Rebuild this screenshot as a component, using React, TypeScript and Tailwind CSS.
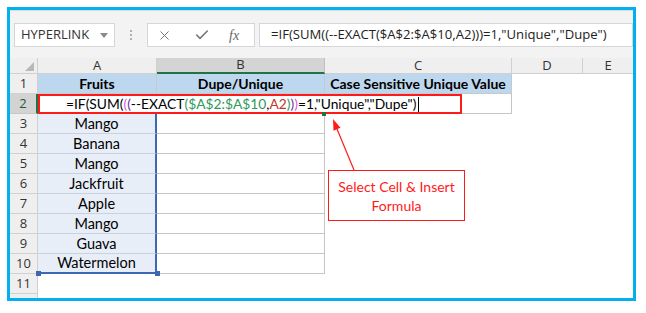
import { X, Check } from 'lucide-react';

const ui = { fontFamily: '"Open Sans", "Liberation Sans", sans-serif' };
const cell = { fontFamily: 'Lato, "Liberation Sans", sans-serif' };

const fruits = ['Mango', 'Banana', 'Mango', 'Jackfruit', 'Apple', 'Mango', 'Guava', 'Watermelon'];

function RowHead({ n, active }: { n: string; active?: boolean }) {
  return (
    <div
      className={
        active
          ? 'w-[28px] h-full shrink-0 flex items-center justify-center bg-[#d3d3d3] border-r-2 border-r-[#217346] border-b border-b-[#c6c6c6] text-[13px] text-[#1e5b35]'
          : 'w-[28px] h-full shrink-0 flex items-center justify-center bg-[#efefef] border-r border-b border-[#d0d0d0] text-[13px] text-[#333]'
      }
      style={ui}
    >
      {n}
    </div>
  );
}

export default function App() {
  return (
    <div className="relative w-[646px] h-[313px] bg-white overflow-hidden">
      <div className="ml-[7px] mt-[7px] w-[629px] h-[294px] border-[3px] border-[#00b0f0] flex flex-col overflow-hidden">
        {/* formula bar */}
        <div className="h-[48px] shrink-0 bg-[#f3f3f3] border-t border-[#dcdcdc] flex items-start pt-[12px] pl-[4px]">
          <div className="w-[101px] h-[24px] bg-white border border-[#d6d6d6] flex items-center justify-between pl-[6px] pr-[6px]">
            <span className="text-[13px] text-[#333]" style={ui}>HYPERLINK</span>
            <span className="w-0 h-0 border-l-[4px] border-r-[4px] border-t-[5px] border-l-transparent border-r-transparent border-t-[#8a8a8a]" />
          </div>
          <div className="w-[32px] h-[24px] flex flex-col items-center justify-center gap-[2px]">
            <span className="w-[2px] h-[2px] bg-[#b0b0b0]" />
            <span className="w-[2px] h-[2px] bg-[#b0b0b0]" />
            <span className="w-[2px] h-[2px] bg-[#b0b0b0]" />
          </div>
          <div className="w-[108px] h-[24px] bg-white border border-[#d6d6d6] flex items-center pl-[9px]">
            <X size={15} strokeWidth={1.6} className="text-[#777]" />
            <Check size={16} strokeWidth={2.4} className="text-[#777] ml-[22px]" />
            <span className="ml-[19px] text-[14px] italic text-[#666]" style={{ fontFamily: '"Liberation Serif", serif' }}>
              fx
            </span>
          </div>
          <div className="ml-[4px] flex-1 h-[24px] bg-white border border-[#d6d6d6] flex items-center pl-[11px]">
            <span className="text-[13.1px] text-[#222] whitespace-nowrap" style={ui}>
              =IF(SUM((--EXACT($A$2:$A$10,A2)))=1,"Unique","Dupe")
            </span>
          </div>
        </div>

        {/* column headers */}
        <div className="h-[16px] shrink-0 flex text-[13px] text-[#333]" style={ui}>
          <div className="w-[28px] shrink-0 bg-[#efefef] border-r border-b border-[#d0d0d0]">
            <svg width="27" height="15">
              <polygon points="15,13 24,13 24,4" fill="#b8b8b8" />
            </svg>
          </div>
          <div className="w-[119px] shrink-0 bg-[#efefef] border-r border-b border-[#d0d0d0] flex items-center justify-center">A</div>
          <div className="w-[168px] shrink-0 bg-[#d4d4d4] border-r border-[#c0c0c0] border-b-2 border-b-[#217346] flex items-center justify-center">B</div>
          <div className="w-[187px] shrink-0 bg-[#efefef] border-r border-b border-[#d0d0d0] flex items-center justify-center">C</div>
          <div className="w-[71px] shrink-0 bg-[#efefef] border-r border-b border-[#d0d0d0] flex items-center justify-center">D</div>
          <div className="flex-1 bg-[#efefef] border-b border-[#d0d0d0] flex items-center justify-center">E</div>
        </div>

        {/* row 1 */}
        <div className="h-[20px] shrink-0 flex text-[14px] text-black" style={cell}>
          <RowHead n="1" />
          <div className="w-[119px] shrink-0 bg-[#bdd7ee] border-r border-b border-[#c3c9d0] flex items-center justify-center font-bold">Fruits</div>
          <div className="w-[168px] shrink-0 bg-[#bdd7ee] border-r border-b border-[#c3c9d0] flex items-center justify-center font-bold">Dupe/Unique</div>
          <div className="w-[187px] shrink-0 bg-[#bdd7ee] border-r border-b border-[#c3c9d0] flex items-center justify-center font-bold">Case Sensitive Unique Value</div>
        </div>

        {/* row 2, cell in edit mode */}
        <div className="h-[20px] shrink-0 flex text-[13.8px] text-black" style={cell}>
          <RowHead n="2" active />
          <div className="w-[424px] shrink-0 border-2 border-[#ff1a1a] flex items-center pl-[26px] whitespace-nowrap">
            <span>=IF(SUM(</span>
            <span className="text-[#d65cd0]">(</span>
            <span className="text-[#7030a0]">(</span>
            <span>--EXACT</span>
            <span className="text-[#2f9a5a]">(</span>
            <span className="text-[#2f9a5a]">$A$2:$A$10</span>
            <span>,</span>
            <span className="text-[#c0392b]">A2</span>
            <span className="text-[#2f9a5a]">)</span>
            <span className="text-[#7030a0]">)</span>
            <span className="text-[#d65cd0]">)</span>
            <span>=1,"Unique","Dupe")</span>
            <span className="w-[1px] h-[15px] bg-black ml-[2px]" />
          </div>
          <div className="w-[50px] shrink-0 border-r border-b border-[#c6c6c6]" />
        </div>

        {/* rows 3-10 */}
        {fruits.map((f, i) => (
          <div key={i} className="h-[20px] shrink-0 flex text-[14.5px] text-black" style={cell}>
            <RowHead n={String(i + 3)} />
            <div
              className={
                i === fruits.length - 1
                  ? 'w-[119px] shrink-0 bg-[#e8eef8] border-r-2 border-b-2 border-[#3d67b1] flex items-center justify-center'
                  : 'w-[119px] shrink-0 bg-[#e8eef8] border-r-2 border-r-[#3d67b1] border-b border-b-[#c9d1de] flex items-center justify-center'
              }
            >
              {f}
            </div>
            <div className="w-[168px] shrink-0 border-r border-b border-[#c6c6c6]" />
          </div>
        ))}

        {/* row 11 and below */}
        <div className="h-[20px] shrink-0 flex">
          <RowHead n="11" />
        </div>
        <div className="flex-1 flex">
          <div className="w-[28px] bg-[#efefef] border-r border-[#d0d0d0]" />
        </div>
      </div>

      {/* handles */}
      <div className="absolute left-[36px] top-[271px] w-[5px] h-[5px] bg-[#3d67b1]" />
      <div className="absolute left-[155px] top-[271px] w-[5px] h-[5px] bg-[#3d67b1]" />
      <div className="absolute left-[322px] top-[112px] w-[4px] h-[4px] bg-[#217346]" />

      {/* callout arrow */}
      <svg className="absolute left-0 top-0 pointer-events-none" width="646" height="313">
        <line x1="354" y1="170" x2="337" y2="129" stroke="#ff1a1a" strokeWidth="1.2" />
        <polygon points="333,119 340.5,127.8 333.5,130.8" fill="#ff1a1a" />
      </svg>

      {/* callout box */}
      <div
        className="absolute left-[328px] top-[170px] w-[137px] h-[51px] bg-white border border-[#ff1a1a] flex flex-col items-center justify-center text-[14px] leading-[19px] text-[#ff1a1a]"
        style={cell}
      >
        <span>Select Cell &amp; Insert</span>
        <span>Formula</span>
      </div>
    </div>
  );
}
